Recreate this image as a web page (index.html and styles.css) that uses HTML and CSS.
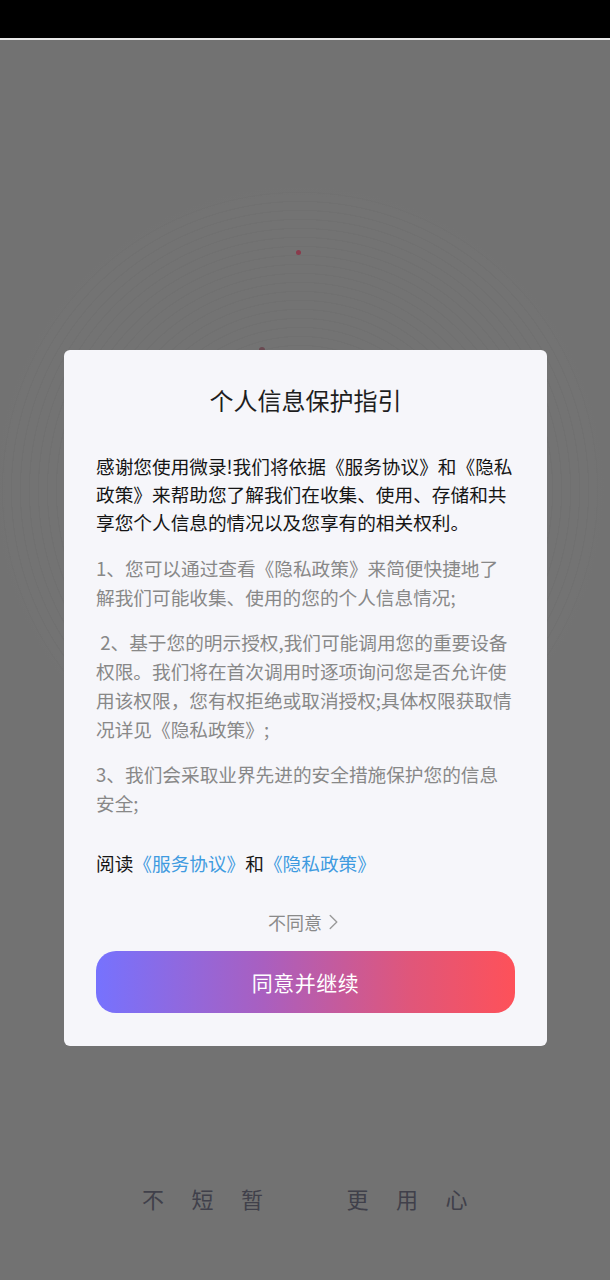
FILE: index.html
```html
<!DOCTYPE html>
<html lang="zh-CN">
<head>
<meta charset="utf-8">
<title>个人信息保护指引</title>
<link rel="stylesheet" href="styles.css">
</head>
<body>
<div class="phone">
  <div class="statusbar"></div>
  <div class="stage">
    <span class="dot dot-a"></span>
    <span class="dot dot-b"></span>
    <div class="dialog">
      <h1 class="dialog-title">个人信息保护指引</h1>
      <p class="intro">感谢您使用微录!我们将依据《服务协议》和《隐私政策》来帮助您了解我们在收集、使用、存储和共享您个人信息的情况以及您享有的相关权利。</p>
      <p class="item item-first">1、您可以通过查看《隐私政策》来简便快捷地了解我们可能收集、使用的您的个人信息情况;</p>
      <p class="item">&nbsp;2、基于您的明示授权,我们可能调用您的重要设备权限。我们将在首次调用时逐项询问您是否允许使用该权限，您有权拒绝或取消授权;具体权限获取情况详见《隐私政策》;</p>
      <p class="item">3、我们会采取业界先进的安全措施保护您的信息安全;</p>
      <p class="read">阅读<a class="link" href="#">《服务协议》</a>和<a class="link" href="#">《隐私政策》</a></p>
      <div class="decline">
        <span>不同意</span>
        <svg class="chev" width="9" height="16" viewBox="0 0 9 16"><polyline points="1.2,1.5 7.8,8 1.2,14.5" fill="none" stroke="#9a9a9a" stroke-width="1.4" stroke-linecap="round" stroke-linejoin="round"/></svg>
      </div>
      <button class="agree">同意并继续</button>
    </div>
    <div class="slogan"><span>不短暂</span><span>更用心</span></div>
  </div>
</div>
</body>
</html>
```

FILE: styles.css
```css
* { box-sizing: border-box; }
html, body { margin: 0; padding: 0; }
body {
  font-family: "Noto Sans CJK SC", "Noto Sans", sans-serif;
  background: #727272;
}
.phone {
  width: 610px;
  min-height: 1280px;
  display: flex;
  flex-direction: column;
}
.statusbar {
  height: 40px;
  background: #000;
  border-bottom: 2px solid #e8e8e8;
}
.stage {
  position: relative;
  flex: 1;
  padding-top: 310px;
  display: flex;
  flex-direction: column;
  align-items: flex-start;
  background:
    radial-gradient(circle at 300px 450px, rgba(114,114,114,0) 0, rgba(114,114,114,0) 294px, #727272 304px),
    repeating-radial-gradient(circle at 300px 450px, #707070 0, #707070 1px, #737373 1.5px, #737373 9px);
}
.dot {
  position: absolute;
  border-radius: 50%;
  background: #8a3b4c;
}
.dot-a { left: 296px; top: 210px; width: 5px; height: 5px; }
.dot-b { left: 259px; top: 307px; width: 6px; height: 6px; background: #6a4a52; }
.dialog {
  position: relative;
  z-index: 1;
  margin-left: 64px;
  width: 483px;
  background: #f6f6fa;
  border-radius: 6px;
  padding: 34px 32px 33px;
  display: flex;
  flex-direction: column;
}
.dialog-title {
  margin: 0;
  font-size: 24px;
  line-height: 32px;
  font-weight: 400;
  color: #1e1e1e;
  text-align: center;
}
.intro {
  margin: 36px 0 0;
  font-size: 18.67px;
  line-height: 28px;
  color: #151515;
}
.item {
  margin: 15px 0 0;
  font-size: 18.67px;
  line-height: 29.3px;
  color: #888888;
}
.item-first { margin-top: 17px; }
.read {
  margin: 31px 0 0;
  font-size: 18.67px;
  line-height: 29px;
  color: #151515;
}
.link {
  color: #3f9be0;
  text-decoration: none;
}
.decline {
  margin-top: 33px;
  display: flex;
  justify-content: center;
  align-items: center;
  gap: 7px;
  font-size: 18px;
  line-height: 24px;
  color: #8a8a8a;
  padding-right: 5px;
}
.chev { display: block; }
.agree {
  margin-top: 17px;
  height: 62px;
  width: 100%;
  border: 0;
  border-radius: 20px;
  background: linear-gradient(90deg, #7672fe 0%, #a95fc0 40%, #e0567a 75%, #fe5159 100%);
  color: #ffffff;
  font-family: inherit;
  font-size: 21px;
  letter-spacing: 0.5px;
}
.slogan {
  align-self: center;
  margin-top: 137px;
  display: flex;
  gap: 56px;
  padding-left: 27px;
  font-size: 22px;
  line-height: 30px;
  letter-spacing: 27.5px;
  color: #40404a;
}
```
